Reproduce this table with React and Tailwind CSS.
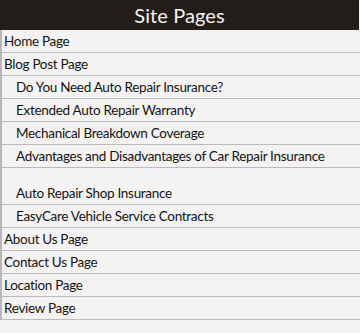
import React from 'react';

// site index: top-level pages and their nested blog posts
const pages = [
  { label: 'Home Page' },
  { label: 'Blog Post Page' },
  { label: 'Do You Need Auto Repair Insurance?', sub: true },
  { label: 'Extended Auto Repair Warranty', sub: true },
  { label: 'Mechanical Breakdown Coverage', sub: true },
  { label: 'Advantages and Disadvantages of Car Repair Insurance', sub: true },
  { label: 'Auto Repair Shop Insurance', sub: true, gap: true },
  { label: 'EasyCare Vehicle Service Contracts', sub: true },
  { label: 'About Us Page' },
  { label: 'Contact Us Page' },
  { label: 'Location Page' },
  { label: 'Review Page' },
];

const App = () => {
  return (
    <div className="w-[360px] h-[333px] bg-[#f4f3f2] font-['Lato','Liberation_Sans',sans-serif] overflow-hidden">
      <div className="h-[30px] mr-px bg-[#231d1a] flex items-center justify-center">
        <h2 className="text-[20px] leading-none text-[#f6f3ee] tracking-[0.1px]">Site Pages</h2>
      </div>
      <ul className="border-l-2 border-[#b9b7bb]">
        {pages.map((page) => (
          <li
            key={page.label}
            className={`flex items-end border-b border-[#bdb9bf] text-[13.5px] tracking-[-0.3px] text-[#141313] leading-none pb-[4px] ${
              page.gap ? 'h-[37px]' : 'h-[23px]'
            } ${page.sub ? 'pl-[14px]' : 'pl-[2px]'}`}
          >
            {page.label}
          </li>
        ))}
      </ul>
    </div>
  );
};

export default App;
